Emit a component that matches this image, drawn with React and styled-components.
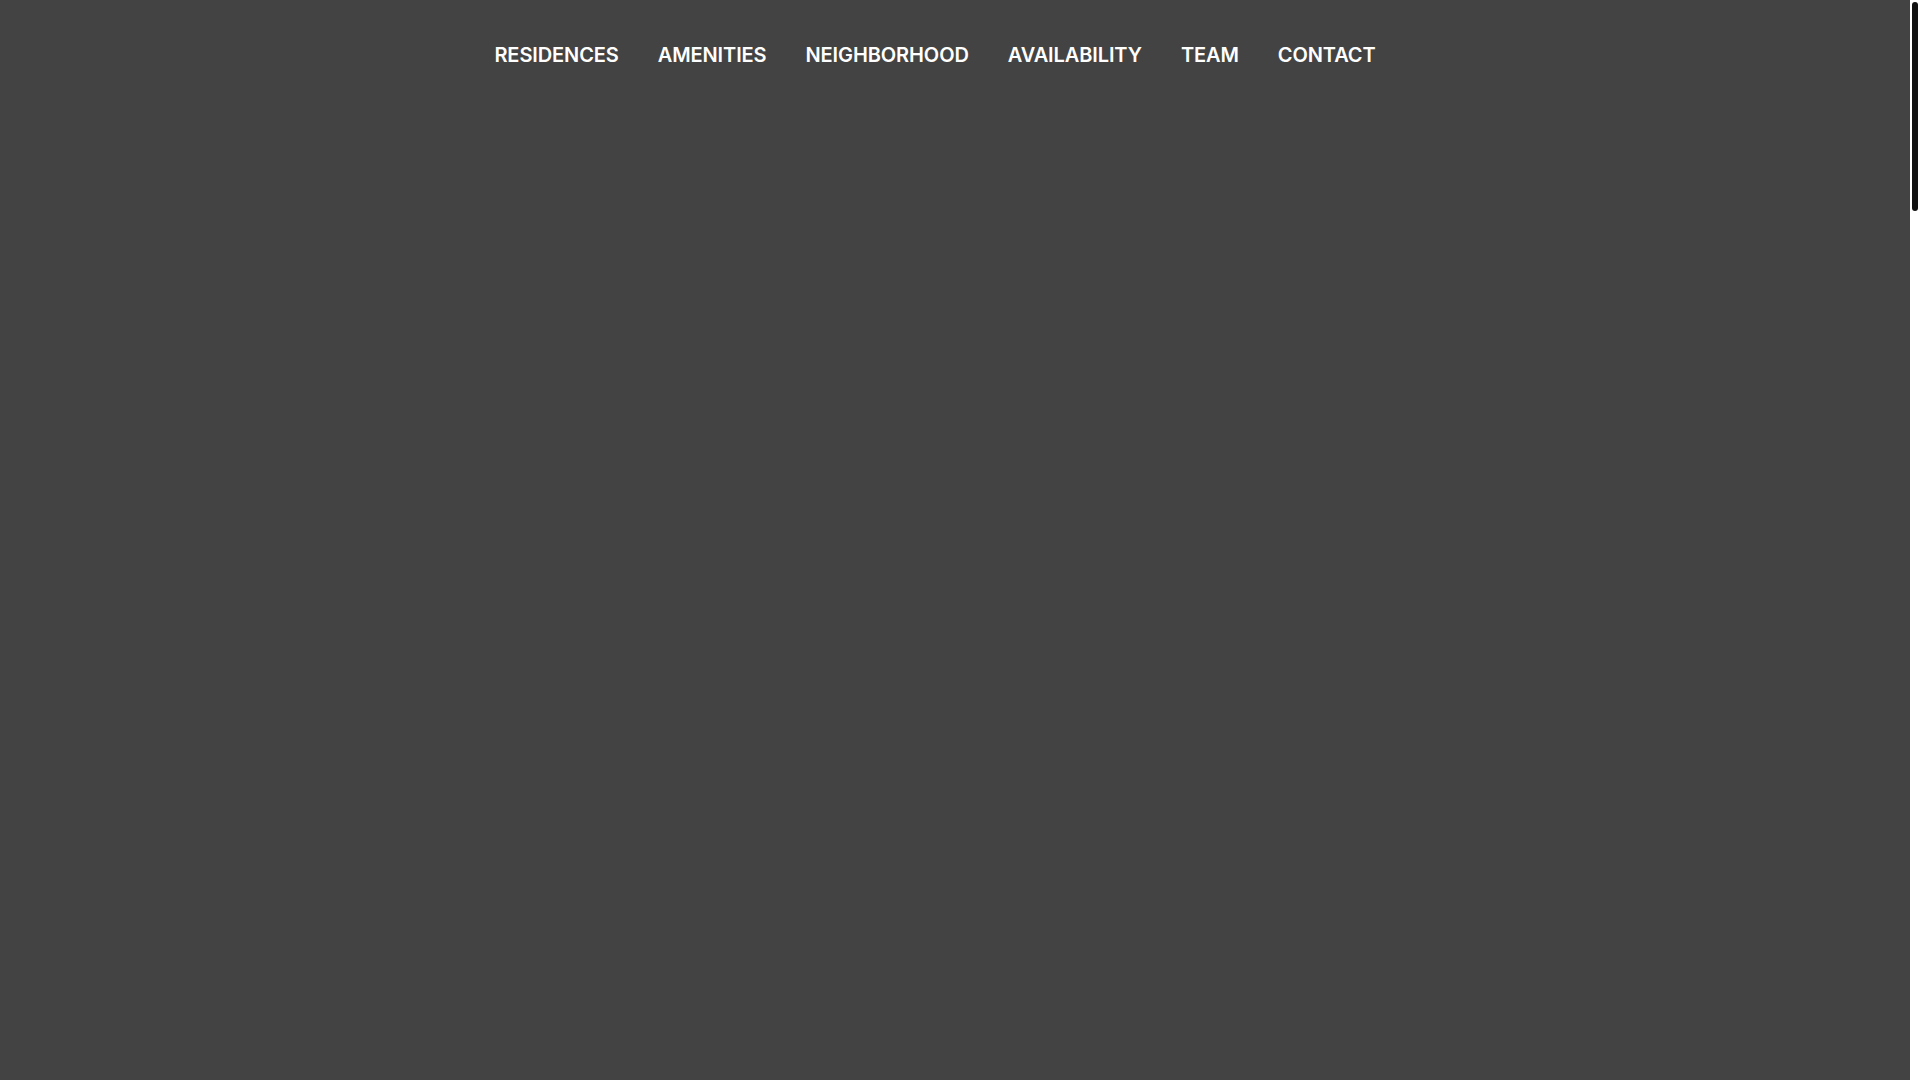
import React from "react";
import styled, { createGlobalStyle } from "styled-components";

const GlobalStyle = createGlobalStyle`
  html, body {
    margin: 0;
    padding: 0;
    height: 100%;
    overflow: hidden;
    background: #434343;
  }

  body {
    font-family: "Inter", "Liberation Sans", sans-serif;
  }
`;

const links = [
  "Residences",
  "Amenities",
  "Neighborhood",
  "Availability",
  "Team",
  "Contact",
];

const App = () => {
  return (
    <>
      <GlobalStyle />
      <Frame>
        <Page>
          <Header>
            <Nav>
              {links.map((label) => (
                <NavLink key={label} href={`#${label.toLowerCase()}`}>
                  {label}
                </NavLink>
              ))}
            </Nav>
          </Header>
          <Hero />
        </Page>
        <ScrollTrack>
          <ScrollThumb />
        </ScrollTrack>
      </Frame>
    </>
  );
};

export default App;

const Frame = styled.div`
  display: flex;
  height: 100vh;
  width: 100vw;
`;

const Page = styled.main`
  flex: 1;
  display: flex;
  flex-direction: column;
  background: #434343;
`;

const Header = styled.header`
  display: flex;
  justify-content: center;
  padding: 40px 40px 0 0;
`;

const Nav = styled.nav`
  display: flex;
  align-items: center;
  gap: 39px;
`;

const NavLink = styled.a`
  color: #ffffff;
  text-decoration: none;
  text-transform: uppercase;
  font-size: 20px;
  font-weight: 600;
  letter-spacing: -0.1px;
  line-height: 30px;
`;

const Hero = styled.section`
  flex: 1;
`;

const ScrollTrack = styled.div`
  width: 10px;
  background: #ffffff;
  padding: 2px 2px 0;
  box-sizing: border-box;
`;

const ScrollThumb = styled.div`
  height: 209px;
  background: #111111;
  border-radius: 3px;
`;
